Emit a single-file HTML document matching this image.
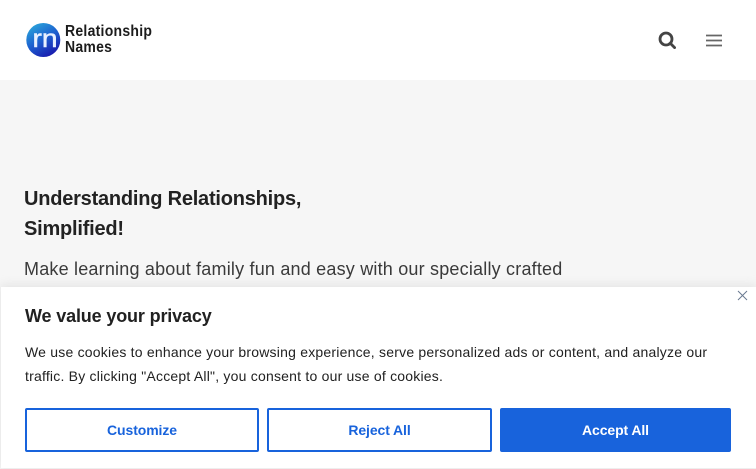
<!DOCTYPE html>
<html><head><meta charset="utf-8"><style>
*{box-sizing:border-box;margin:0;padding:0}
html,body{width:756px;height:469px;overflow:hidden;background:#f6f6f6;font-family:"Liberation Sans",sans-serif}
.a{position:absolute;white-space:nowrap}
.btn{position:absolute;top:408px;height:44px;border-radius:2px;border:2px solid #1863dc;font-weight:700;font-size:14px;line-height:40px;text-align:center;color:#1863dc;background:#fff;letter-spacing:-.1px}
</style></head><body>
<div class="a" style="left:0;top:0;width:756px;height:80px;background:#fff"></div>
<svg class="a" style="left:26px;top:23px" width="35" height="35" viewBox="0 0 35 35"><defs><linearGradient id="g" x1="0" y1="0" x2="0.6" y2="1"><stop offset="0" stop-color="#2fb4dc"/><stop offset="0.55" stop-color="#1c62d0"/><stop offset="1" stop-color="#1a1fb0"/></linearGradient></defs><circle cx="17.3" cy="17" r="17" fill="url(#g)"/><text x="6.5" y="24" font-family="Liberation Sans" font-size="25" fill="#e8f0ff" stroke="#e8f0ff" stroke-width=".5" textLength="25" lengthAdjust="spacingAndGlyphs">rn</text></svg>
<div class="a" style="left:65px;top:24px;font-size:16px;font-weight:700;line-height:16px;color:#1c1c1c;letter-spacing:.3px;transform:scaleX(.875);transform-origin:0 0">Relationship<br>Names</div>
<svg class="a" style="left:658px;top:31px" width="18" height="18" viewBox="0 0 18 18"><circle cx="8" cy="8" r="6" fill="none" stroke="#444" stroke-width="2.8"/><path d="M12.3 12.3L16.6 16.6" stroke="#444" stroke-width="2.8" stroke-linecap="round"/></svg>
<svg class="a" style="left:705px;top:33px" width="18" height="14" viewBox="0 0 18 14"><path d="M1 2.5H17M1 7.5H17M1 12.5H17" stroke="#666" stroke-width="1.7"/></svg>
<div class="a" style="left:24px;top:184px;font-size:20px;font-weight:700;line-height:30px;color:#222;letter-spacing:-.22px">Understanding Relationships,<br>Simplified!</div>
<div class="a" style="left:24px;top:256px;font-size:18px;line-height:26px;color:#3a3a3a;letter-spacing:.2px">Make learning about family fun and easy with our specially crafted</div>
<div class="a" style="left:1px;top:287px;width:755px;height:181px;background:#fff;box-shadow:0 -1px 10px rgba(172,171,171,.3)"></div>
<svg class="a" style="left:737px;top:290px" width="11" height="11" viewBox="0 0 11 11"><path d="M1 1L10 10M10 1L1 10" stroke="#6a7a90" stroke-width="1"/></svg>
<div class="a" style="left:25px;top:304px;font-size:18px;font-weight:700;line-height:24px;color:#212121;letter-spacing:-.15px">We value your privacy</div>
<div class="a" style="left:25px;top:340px;font-size:14px;line-height:24px;color:#212121;letter-spacing:.213px">We use cookies to enhance your browsing experience, serve personalized ads or content, and analyze our<br>traffic. By clicking "Accept All", you consent to our use of cookies.</div>
<div class="btn" style="left:25px;width:234px">Customize</div>
<div class="btn" style="left:267px;width:225px">Reject All</div>
<div class="btn" style="left:500px;width:231px;background:#1863dc;color:#fff">Accept All</div>
</body></html>
